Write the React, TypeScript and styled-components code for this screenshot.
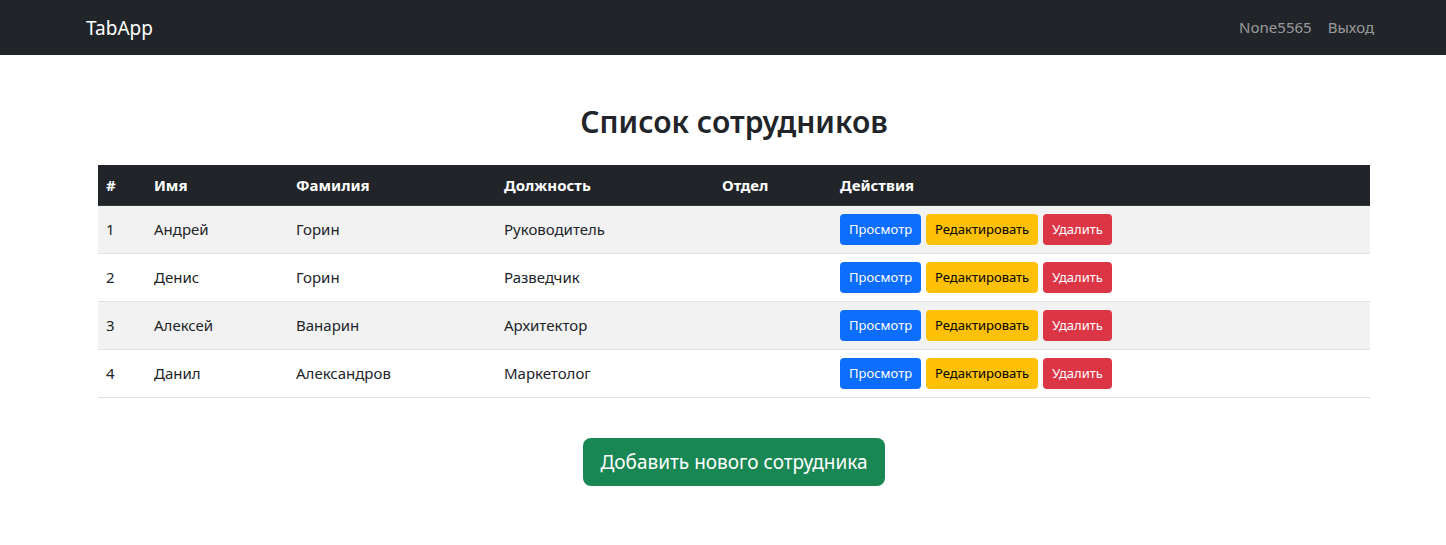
import { createGlobalStyle, styled } from "styled-components";

const GlobalStyle = createGlobalStyle`
  body {
    margin: 0;
    font-family: "Noto Sans", "Open Sans", sans-serif;
    font-size: 16px;
    line-height: 1.5;
    color: #212529;
    background: #fff;
  }
  * { box-sizing: border-box; }
`;

type Employee = {
  id: number;
  firstName: string;
  lastName: string;
  position: string;
  department: string;
};

const employees: Employee[] = [
  { id: 1, firstName: "Андрей", lastName: "Горин", position: "Руководитель", department: "" },
  { id: 2, firstName: "Денис", lastName: "Горин", position: "Разведчик", department: "" },
  { id: 3, firstName: "Алексей", lastName: "Ванарин", position: "Архитектор", department: "" },
  { id: 4, firstName: "Данил", lastName: "Александров", position: "Маркетолог", department: "" },
];

const columns = [
  { title: "#", width: 48 },
  { title: "Имя", width: 142 },
  { title: "Фамилия", width: 208 },
  { title: "Должность", width: 218 },
  { title: "Отдел", width: 118 },
  { title: "Действия", width: undefined },
];

export default function App() {
  return (
    <>
      <GlobalStyle />
      <Navbar>
        <Brand>TabApp</Brand>
        <NavRight>
          <NavLink>None5565</NavLink>
          <NavLink>Выход</NavLink>
        </NavRight>
      </Navbar>
      <Main>
        <Title>Список сотрудников</Title>
        <Table>
          <colgroup>
            {columns.map((c) => (
              <col key={c.title} width={c.width} />
            ))}
          </colgroup>
          <thead>
            <tr>
              {columns.map((c) => (
                <Th key={c.title}>{c.title}</Th>
              ))}
            </tr>
          </thead>
          <tbody>
            {employees.map((e, i) => (
              <Row key={e.id} $striped={i % 2 === 0}>
                <Td>{e.id}</Td>
                <Td>{e.firstName}</Td>
                <Td>{e.lastName}</Td>
                <Td>{e.position}</Td>
                <Td>{e.department}</Td>
                <Td>
                  <Actions>
                    <SmallButton $variant="primary">Просмотр</SmallButton>
                    <SmallButton $variant="warning">Редактировать</SmallButton>
                    <SmallButton $variant="danger">Удалить</SmallButton>
                  </Actions>
                </Td>
              </Row>
            ))}
          </tbody>
        </Table>
        <Footer>
          <AddButton>Добавить нового сотрудника</AddButton>
        </Footer>
      </Main>
    </>
  );
}

const Navbar = styled.nav`
  display: flex;
  align-items: center;
  justify-content: space-between;
  height: 55px;
  padding: 0 64px 0 86px;
  background: #212529;
`;

const Brand = styled.a`
  font-size: 19px;
  line-height: 30px;
  color: #fff;
  cursor: pointer;
`;

const NavRight = styled.div`
  display: flex;
  align-items: center;
`;

const NavLink = styled.a`
  padding: 8px;
  font-size: 15px;
  color: rgba(255, 255, 255, 0.55);
  cursor: pointer;
`;

const Main = styled.main`
  padding: 48px 76px 0 98px;
`;

const Title = styled.h2`
  margin: 0 0 24px;
  font-size: 30px;
  font-weight: 600;
  line-height: 38px;
  text-align: center;
`;

const Table = styled.table`
  width: 100%;
  border-collapse: collapse;
  table-layout: fixed;
  margin-bottom: 16px;
`;

const Th = styled.th`
  height: 40px;
  padding: 0 8px;
  text-align: left;
  font-weight: 700;
  font-size: 15px;
  color: #fff;
  background: #212529;
  border-bottom: 1px solid #373b3e;
`;

const Row = styled.tr<{ $striped: boolean }>`
  background: ${(p) => (p.$striped ? "#f2f2f2" : "#fff")};
`;

const Td = styled.td`
  height: 48px;
  padding: 0 8px;
  font-size: 15px;
  vertical-align: middle;
  border-bottom: 1px solid #dee2e6;
`;

const Actions = styled.div`
  display: flex;
  gap: 5px;
  padding-top: 1px;
`;

const variants = {
  primary: { bg: "#0d6efd", fg: "#fff" },
  warning: { bg: "#ffc107", fg: "#000" },
  danger: { bg: "#dc3545", fg: "#fff" },
};

const SmallButton = styled.button<{ $variant: keyof typeof variants }>`
  display: inline-flex;
  align-items: center;
  height: 31px;
  padding: 0 9px;
  border: none;
  border-radius: 4px;
  font-family: inherit;
  font-size: 13px;
  line-height: 1.5;
  cursor: pointer;
  background: ${(p) => variants[p.$variant].bg};
  color: ${(p) => variants[p.$variant].fg};
`;

const Footer = styled.div`
  display: flex;
  justify-content: center;
  padding-top: 24px;
`;

const AddButton = styled.button`
  height: 48px;
  padding: 0 17px;
  border: none;
  border-radius: 8px;
  font-family: inherit;
  font-size: 19px;
  color: #fff;
  background: #198754;
  cursor: pointer;
`;
